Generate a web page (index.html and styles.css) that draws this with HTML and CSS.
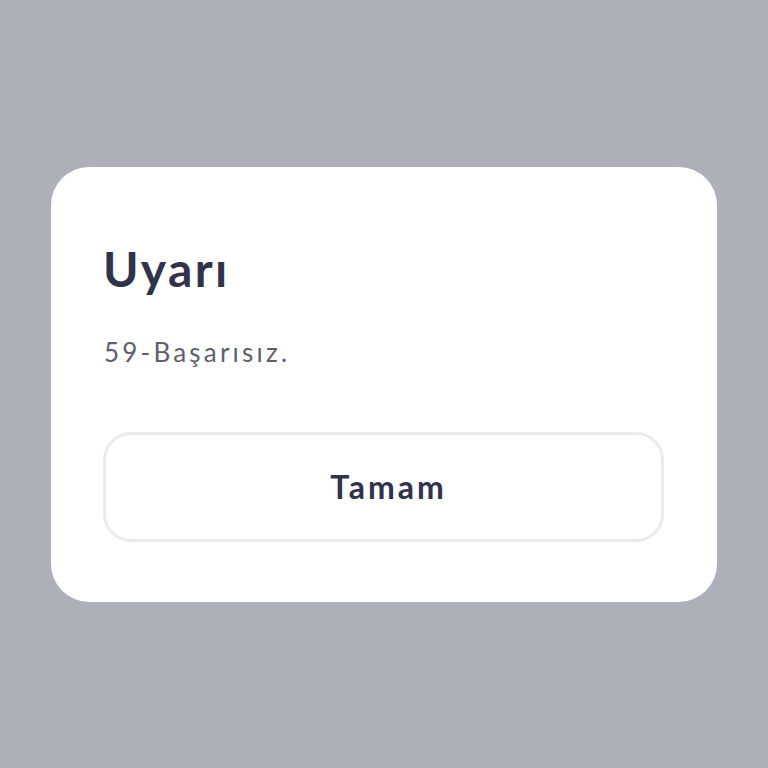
FILE: index.html
```html
<!DOCTYPE html>
<html lang="tr">
<head>
    <meta charset="UTF-8">
    <title>Uyarı</title>
    <meta name="viewport" content="width=device-width, initial-scale=1.0">
    <link rel="stylesheet" href="styles.css">
</head>
<body>
    <div class="overlay">
        <div class="dialog">
            <h1 class="dialog-title">Uyarı</h1>
            <p class="dialog-message">59-Başarısız.</p>
            <button class="dialog-button" type="button">Tamam</button>
        </div>
    </div>
</body>
</html>
```

FILE: styles.css
```css
html, body {
    height: 100%;
    margin: 0;
    padding: 0;
}
body {
    background: #adb0b8;
    font-family: Lato, "Noto Sans", Arial, sans-serif;
    color: #30334a;
}
.overlay {
    height: 100vh;
    display: flex;
    align-items: center;
    justify-content: center;
}
.dialog {
    width: 666px;
    box-sizing: border-box;
    background: #fff;
    border-radius: 38px;
    padding: 78px 53px 60px 52px;
    display: flex;
    flex-direction: column;
}
.dialog-title {
    margin: 0;
    font-size: 48px;
    line-height: 1;
    font-weight: 700;
    letter-spacing: 2.4px;
    color: #30334a;
}
.dialog-message {
    margin: 46px 0 0 1px;
    font-size: 26px;
    line-height: 1;
    color: #5d5f6d;
    letter-spacing: 3.2px;
}
.dialog-button {
    margin-top: 67px;
    height: 110px;
    background: #fff;
    border: 3px solid #ebebeb;
    border-radius: 28px;
    font-family: inherit;
    font-size: 32px;
    font-weight: 700;
    color: #30334a;
    letter-spacing: 3px;
    padding: 0 0 0 10px;
}
```
